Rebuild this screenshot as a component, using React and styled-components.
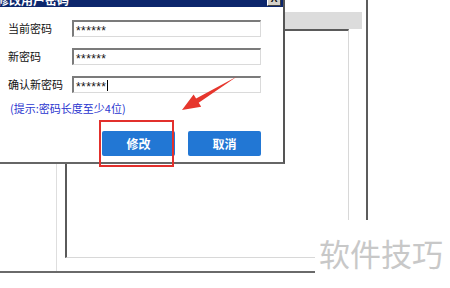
import styled, { createGlobalStyle } from 'styled-components';

const GlobalStyle = createGlobalStyle`
  * { box-sizing: border-box; }
  body {
    margin: 0;
    background: #fff;
    font-family: "Noto Sans CJK SC", "Noto Sans", sans-serif;
  }
`;

const Stage = styled.div`
  position: relative;
  width: 450px;
  height: 288px;
  overflow: hidden;
  background: #fff;
`;

/* window behind the dialog */
const BackWindow = styled.div`
  display: grid;
  grid-template-columns: 57px 1fr;
  width: 368px;
  height: 273px;
  border-right: 2px solid #5c5c5c;
  border-bottom: 2px solid #6a6a6a;
`;

const Sidebar = styled.div`
  border-right: 1px solid #dedede;
`;

const Content = styled.div`
  display: flex;
  flex-direction: column;
  padding: 12px 4px 13px 8px;
`;

const TabBand = styled.div`
  height: 17px;
  background: #dcdcdc;
`;

const Panel = styled.div`
  flex: 1;
  margin-right: 13px;
  background: #fff;
  border-top: 2px solid #5a5a5a;
  border-left: 2px solid #5a5a5a;
  border-right: 1px solid #d8d8d8;
  border-bottom: 1px solid #d8d8d8;
`;

/* dialog */
const Dialog = styled.div`
  position: absolute;
  left: -10px;
  top: -13px;
  width: 295px;
  background: #fff;
  border-right: 2px solid #555;
  border-bottom: 2px solid #666;
`;

const TitleBar = styled.div`
  display: flex;
  align-items: flex-end;
  justify-content: space-between;
  height: 20px;
  padding: 0 2px 0 7px;
  background: #0c266c;
`;

const Title = styled.span`
  color: #fff;
  font-size: 12px;
  font-weight: bold;
  line-height: 15px;
`;

const CloseBtn = styled.span`
  display: flex;
  align-items: center;
  justify-content: center;
  width: 14px;
  height: 14px;
  margin-bottom: 1px;
  background: #d4d0c8;
  border-top: 1px solid #fff;
  border-left: 1px solid #fff;
  border-right: 1px solid #404040;
  border-bottom: 1px solid #404040;
  color: #111;
  font-family: "Liberation Sans", sans-serif;
  font-size: 10px;
  font-weight: bold;
  line-height: 1;
`;

const Body = styled.div`
  padding: 13px 22px 6px 18px;
`;

const FormGrid = styled.div`
  display: grid;
  grid-template-columns: 64px 1fr;
  grid-auto-rows: 17px;
  row-gap: 11px;
  align-items: center;
`;

const Label = styled.span`
  font-size: 11px;
  color: #111;
  line-height: 17px;
`;

const Field = styled.div`
  display: flex;
  align-items: center;
  height: 17px;
  padding: 3px 0 0 2px;
  border-top: 2px solid #7b7b7b;
  border-left: 2px solid #7b7b7b;
  border-right: 1px solid #dadada;
  border-bottom: 1px solid #dadada;
  font-family: "Liberation Sans", sans-serif;
  font-size: 12px;
  letter-spacing: 0.4px;
  color: #111;
  line-height: 12px;
`;

const Cursor = styled.span`
  display: inline-block;
  width: 1px;
  height: 11px;
  margin: -3px 0 0 1px;
  background: #000;
`;

const Hint = styled.div`
  margin-top: 7px;
  padding-left: 2px;
  font-size: 11px;
  line-height: 16px;
  color: #2b36cf;
`;

const Actions = styled.div`
  display: flex;
  justify-content: flex-end;
  gap: 13px;
  margin-top: 15px;
`;

const Button = styled.button`
  width: 73px;
  height: 25px;
  border: none;
  border-radius: 2px;
  background: #2277d4;
  color: #fff;
  font-family: "Noto Sans CJK SC", sans-serif;
  font-size: 12px;
  font-weight: bold;
  padding: 0;
`;

/* annotations over the screenshot */
const Highlight = styled.div`
  position: absolute;
  left: 99px;
  top: 120px;
  width: 75px;
  height: 47px;
  border: 2px solid #e2302c;
`;

const Arrow = styled.svg`
  position: absolute;
  left: 0;
  top: 0;
`;

const Watermark = styled.div`
  position: absolute;
  left: 315px;
  top: 220px;
  right: 0;
  bottom: 0;
  padding: 17px 0 0 4px;
  background: #fff;
  color: #c8c8c8;
  font-size: 31px;
  line-height: 31px;
  letter-spacing: 0;
`;

export default function App() {
  return (
    <>
      <GlobalStyle />
      <Stage>
        <BackWindow>
          <Sidebar />
          <Content>
            <TabBand />
            <Panel />
          </Content>
        </BackWindow>

        <Dialog>
          <TitleBar>
            <Title>修改用户密码</Title>
            <CloseBtn>X</CloseBtn>
          </TitleBar>
          <Body>
            <FormGrid>
              <Label>当前密码</Label>
              <Field>******</Field>
              <Label>新密码</Label>
              <Field>******</Field>
              <Label>确认新密码</Label>
              <Field>******<Cursor /></Field>
            </FormGrid>
            <Hint>(提示:密码长度至少4位)</Hint>
            <Actions>
              <Button>修改</Button>
              <Button>取消</Button>
            </Actions>
          </Body>
        </Dialog>

        <Highlight />
        <Arrow width="450" height="288" viewBox="0 0 450 288">
          <polygon
            points="237,76.5 198.7,102.8 201.2,106.8 182,110 193.6,94.6 196.1,98.6"
            fill="#e6362d"
          />
        </Arrow>

        <Watermark>软件技巧</Watermark>
      </Stage>
    </>
  );
}
